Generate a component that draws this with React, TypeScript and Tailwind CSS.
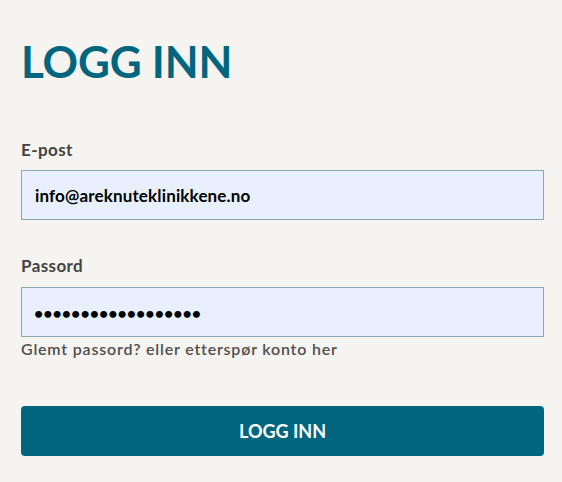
export default function App() {
  return (
    <div className="min-h-[482px] bg-[#f6f4f1] pl-[21px] pr-[18px] pt-[35px] font-['Lato',sans-serif]">
      <h1 className="text-[44px] font-bold leading-[52px] tracking-[-0.2px] text-[#006680]">LOGG INN</h1>

      <form className="mt-[53px] flex flex-col" onSubmit={(e) => e.preventDefault()}>
        <label className="text-[17px] font-bold leading-[20px] tracking-[0.4px] text-[#444]">E-post</label>
        <input
          type="text"
          defaultValue="info@areknuteklinikkene.no"
          className="mt-[10px] h-[50px] w-full border border-[#8aa7b3] bg-[#e8f0fe] px-[13px] text-[17px] font-bold tracking-[0.15px] text-black outline-none"
        />

        <label className="mt-[36px] text-[17px] font-bold leading-[20px] tracking-[0.4px] text-[#444]">Passord</label>
        <input
          type="password"
          defaultValue="hemmeligpassord123"
          className="mt-[11px] h-[50px] w-full border border-[#8aa7b3] bg-[#e8f0fe] pl-[12px] pr-[13px] text-[16px] font-bold text-black outline-none"
        />
        <p className="mt-[2px] text-[16px] font-semibold leading-[20px] tracking-[0.8px] text-[#505050]">
          Glemt passord? eller etterspør konto her
        </p>

        <button
          type="submit"
          className="mt-[47px] h-[50px] w-full rounded-[4px] bg-[#006680] text-[18px] font-bold text-white"
        >
          LOGG INN
        </button>
      </form>
    </div>
  )
}
